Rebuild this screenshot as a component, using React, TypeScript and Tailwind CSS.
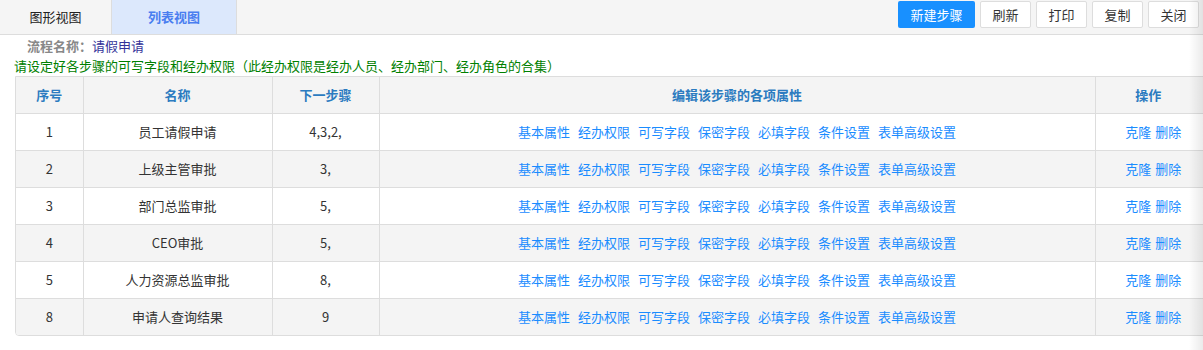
import React from 'react';

const steps = [
  { id: '1', name: '员工请假申请', next: '4,3,2,' },
  { id: '2', name: '上级主管审批', next: '3,' },
  { id: '3', name: '部门总监审批', next: '5,' },
  { id: '4', name: 'CEO审批', next: '5,' },
  { id: '5', name: '人力资源总监审批', next: '8,' },
  { id: '8', name: '申请人查询结果', next: '9' },
];

const props = ['基本属性', '经办权限', '可写字段', '保密字段', '必填字段', '条件设置', '表单高级设置'];

const buttons = ['刷新', '打印', '复制', '关闭'];

const App: React.FC = () => {
  return (
    <div className="relative w-[1203px] h-[350px] bg-white overflow-hidden text-[13px] text-[#333] font-['Microsoft_YaHei','Noto_Sans_CJK_SC',sans-serif]">
      <div className="flex items-stretch h-[35px] bg-[#f5f5f5] border-b border-[#ddd]">
        <div className="w-[112px] flex items-center justify-center border-r border-[#ddd] text-[#222]">图形视图</div>
        <div className="w-[125px] flex items-center justify-center border-r border-[#ddd] bg-[#dce8fc] text-[#4a7ef0] font-semibold">列表视图</div>
        <div className="flex-1 flex items-start justify-end gap-[5px] pt-px pr-1">
          <button className="w-[77px] h-[27px] rounded-[2px] bg-[#1890ff] text-white">新建步骤</button>
          {buttons.map((b) => (
            <button key={b} className="w-[51px] h-[27px] rounded-[2px] bg-white border border-[#ddd] text-[#333]">{b}</button>
          ))}
        </div>
      </div>

      <div className="pt-px">
        <div className="h-5 leading-5 pl-[27px]">
          <span className="text-[#888] font-bold">流程名称：</span>
          <span className="text-[#333399]">请假申请</span>
        </div>
        <div className="h-5 leading-5 pl-[14px] text-[#008000]">
          请设定好各步骤的可写字段和经办权限（此经办权限是经办人员、经办部门、经办角色的合集）
        </div>
      </div>

      <div className="ml-[15px] w-[1195px] border border-[#ddd] rounded-b-[4px] overflow-hidden">
        <table className="w-full border-collapse table-fixed">
          <colgroup>
            <col className="w-[67px]" />
            <col className="w-[189px]" />
            <col className="w-[107px]" />
            <col className="w-[716px]" />
            <col />
          </colgroup>
          <thead>
            <tr className="h-[36px] bg-[#f4f4f4] text-[#2b7bc0] font-bold">
              <th className="border-r border-b border-[#ddd]">序号</th>
              <th className="border-r border-b border-[#ddd]">名称</th>
              <th className="border-r border-b border-[#ddd]">下一步骤</th>
              <th className="border-r border-b border-[#ddd]">编辑该步骤的各项属性</th>
              <th className="border-b border-[#ddd] pr-[8px]">操作</th>
            </tr>
          </thead>
          <tbody>
            {steps.map((s, i) => (
              <tr key={s.id} className={`h-[37px] ${i % 2 === 1 ? 'bg-[#f4f4f4]' : 'bg-white'}`}>
                <td className={`text-center border-r border-[#ddd] ${i < steps.length - 1 ? 'border-b' : ''}`}>{s.id}</td>
                <td className={`text-center border-r border-[#ddd] ${i < steps.length - 1 ? 'border-b' : ''}`}>{s.name}</td>
                <td className={`text-center border-r border-[#ddd] ${i < steps.length - 1 ? 'border-b' : ''}`}>{s.next}</td>
                <td className={`text-center border-r border-[#ddd] ${i < steps.length - 1 ? 'border-b' : ''}`}>
                  <div className="flex justify-center gap-[8px] text-[13px] text-[#1a8cff]">
                    {props.map((p) => (
                      <a key={p} className="cursor-pointer">{p}</a>
                    ))}
                  </div>
                </td>
                <td className={`text-center border-[#ddd] ${i < steps.length - 1 ? 'border-b' : ''}`}>
                  <div className="flex justify-center gap-[4px] text-[13px] text-[#1a8cff] pl-[2px]">
                    <a className="cursor-pointer">克隆</a>
                    <a className="cursor-pointer">删除</a>
                  </div>
                </td>
              </tr>
            ))}
          </tbody>
        </table>
      </div>

      <div className="absolute top-0 right-0 h-full w-[14px] bg-gradient-to-r from-transparent to-black/[0.08] pointer-events-none" />
    </div>
  );
};

export default App;
